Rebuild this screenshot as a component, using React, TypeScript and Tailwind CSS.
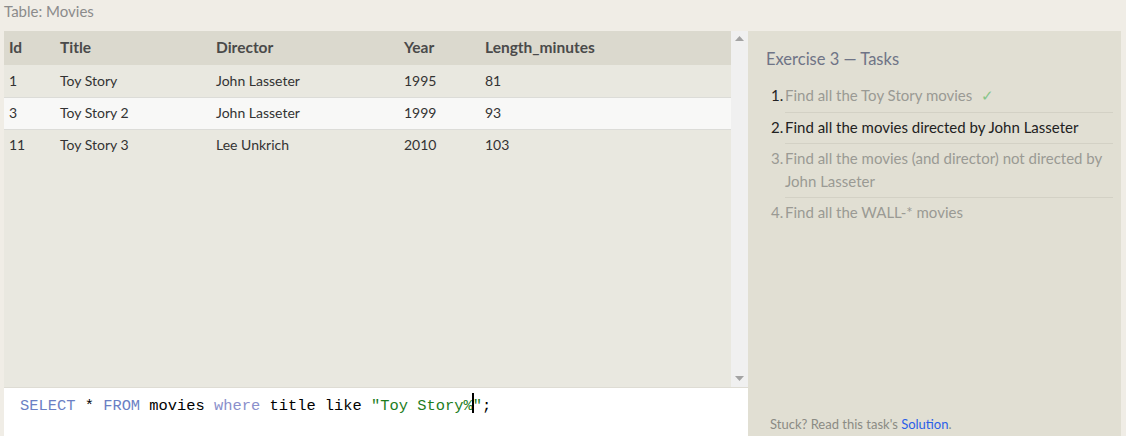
import React from "react";

type Movie = {
  id: number;
  title: string;
  director: string;
  year: number;
  length: number;
};

const movies: Movie[] = [
  { id: 1, title: "Toy Story", director: "John Lasseter", year: 1995, length: 81 },
  { id: 3, title: "Toy Story 2", director: "John Lasseter", year: 1999, length: 93 },
  { id: 11, title: "Toy Story 3", director: "Lee Unkrich", year: 2010, length: 103 },
];

const tasks = [
  { text: "Find all the Toy Story movies", state: "done" },
  { text: "Find all the movies directed by John Lasseter", state: "active" },
  { text: "Find all the movies (and director) not directed by John Lasseter", state: "todo" },
  { text: "Find all the WALL-* movies", state: "todo" },
];

export default function App() {
  return (
    <div
      className="flex h-[436px] w-[1126px] flex-col overflow-hidden bg-[#f0ede6] text-[14px]"
      style={{ fontFamily: "Lato, 'Open Sans', sans-serif" }}
    >
      <div className="h-[31px] pl-[4px] pt-[1px] text-[15px] leading-[20px] text-[#8b8b8b]">
        Table: Movies
      </div>

      <div className="flex min-h-0 flex-1 pl-[4px] pr-[5px]">
        <div className="flex w-[744px] flex-col">
          <div className="flex min-h-0 flex-1">
            <ResultTable />
            <Scrollbar />
          </div>
          <SqlEditor />
        </div>

        <TaskPanel />
      </div>
    </div>
  );
}

function ResultTable() {
  return (
    <div className="flex-1 bg-[#e9e8e0]">
      <table className="w-full border-collapse text-left text-[14px] text-[#333]">
        <thead className="bg-[#dbd9ce] text-[15.5px] text-[#4a4a4a]">
          <tr className="h-[34px]">
            <th className="w-[56px] pl-[5px] font-bold">Id</th>
            <th className="w-[156px] font-bold">Title</th>
            <th className="w-[188px] font-bold">Director</th>
            <th className="w-[81px] font-bold">Year</th>
            <th className="font-bold">Length_minutes</th>
          </tr>
        </thead>
        <tbody>
          {movies.map((m, i) => (
            <tr
              key={m.id}
              className={`h-[32px] border-b border-[#dcdcd8] ${
                i === 1 ? "bg-[#f8f8f7]" : ""
              } last:border-0`}
            >
              <td className="pb-[1px] pl-[5px]">{m.id}</td>
              <td className="pb-[1px]">{m.title}</td>
              <td className="pb-[1px]">{m.director}</td>
              <td className="pb-[1px]">{m.year}</td>
              <td className="pb-[1px]">{m.length}</td>
            </tr>
          ))}
        </tbody>
      </table>
    </div>
  );
}

function Scrollbar() {
  return (
    <div className="flex w-[17px] flex-col items-center justify-between bg-[#f0f0f0] pb-[6px] pt-[5px]">
      <svg width="9" height="5" viewBox="0 0 9 5">
        <path d="M4.5 0 L9 5 L0 5 Z" fill="#a3a3a3" />
      </svg>
      <svg width="9" height="5" viewBox="0 0 9 5">
        <path d="M0 0 L9 0 L4.5 5 Z" fill="#a3a3a3" />
      </svg>
    </div>
  );
}

function SqlEditor() {
  return (
    <div className="h-[49px] border-t border-[#dedcd4] bg-white pl-[16px] pt-[6px]">
      <div
        className="text-[15.4px] leading-[24px] text-black"
        style={{ fontFamily: "'Liberation Mono', 'DejaVu Sans Mono', monospace" }}
      >
        <span className="text-[#6b7fc4]">SELECT</span> *{" "}
        <span className="text-[#6b7fc4]">FROM</span> movies{" "}
        <span className="text-[#8a8fcb]">where</span> title like{" "}
        <span className="text-[#1d7d1d]">"Toy Story%</span>
        <span className="relative inline-block w-0">
          <span className="absolute -left-[1px] top-[-17px] h-[20px] w-[2px] bg-black" />
        </span>
        <span className="text-[#1d7d1d]">"</span>;
      </div>
    </div>
  );
}

function TaskPanel() {
  return (
    <div className="flex w-[373px] flex-col bg-[#e1dfd3] pl-[18px] pr-[8px]">
      <h2 className="mt-[17px] text-[16.5px] leading-[22px] text-[#6f7486]">
        Exercise 3 — Tasks
      </h2>

      <ol className="mt-[11px] pl-[5px]">
        {tasks.map((task, i) => (
          <li key={i} className="flex text-[15px] leading-[22.5px]">
            <span
              className={`w-[14px] shrink-0 pt-[3px] ${
                task.state === "todo" ? "text-[#9a9a94]" : "text-[#222]"
              }`}
            >
              {i + 1}.
            </span>
            <div
              className={`flex-1 pb-[5px] pt-[3px] ${
                i < tasks.length - 1 ? "border-b border-[#d3d1c5]" : ""
              } ${task.state === "active" ? "text-[#222]" : "text-[#9a9a94]"}`}
            >
              {task.text}
              {task.state === "done" && (
                <span className="ml-[9px] text-[#86c58a]">✓</span>
              )}
            </div>
          </li>
        ))}
      </ol>

      <p className="mt-auto pb-[2px] pl-[4px] text-[13px] leading-[20px] text-[#8b8b84]">
        Stuck? Read this task's <span className="text-[#2b5fe8]">Solution</span>.
      </p>
    </div>
  );
}
